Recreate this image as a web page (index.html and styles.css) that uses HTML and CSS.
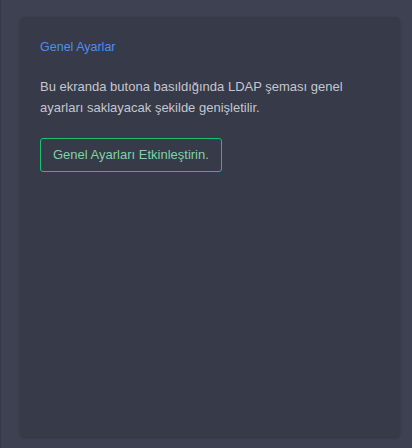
FILE: index.html
```html
<!DOCTYPE html>
<html lang="tr">
<head>
  <meta charset="UTF-8">
  <title>Genel Ayarlar</title>
  <link rel="stylesheet" href="styles.css">
</head>
<body>
  <div id="page">
    <!-- Settings card -->
    <div class="card">
      <h2 class="card-title">Genel Ayarlar</h2>
      <p class="card-text">
        Bu ekranda butona basıldığında LDAP şeması genel
        ayarları saklayacak şekilde genişletilir.
      </p>
      <button class="outline-button">Genel Ayarları Etkinleştirin.</button>
    </div>
  </div>
</body>
</html>
```

FILE: styles.css
```css
:root {
  --page-bg: #3e4152;
  --card-bg: #363a49;
  --title-color: #4d8ff0;
  --text-color: #c5c7cf;
  --success-color: #1fbf72;
  --success-text: #7fd3a6;
}

html, body {
  margin: 0;
  padding: 0;
  height: 100%;
}

body {
  background: var(--page-bg);
  font-family: "Liberation Sans", Arial, sans-serif;
  border-left: 1px solid #363948;
  box-sizing: border-box;
}

#page {
  padding: 17px 12px 11px 19px;
  box-sizing: border-box;
  height: 100%;
}

.card {
  background: var(--card-bg);
  border-radius: 5px;
  box-shadow: 0 1px 3px rgba(0,0,0,0.2);
  height: 100%;
  box-sizing: border-box;
  padding: 21px 20px 20px;
}

.card-title {
  margin: 0 0 20px;
  font-size: 12.5px;
  line-height: 18px;
  font-weight: normal;
  color: var(--title-color);
}

.card-text {
  margin: 0 0 20px;
  font-size: 13px;
  line-height: 21px;
  color: var(--text-color);
}

.outline-button {
  background: none;
  border: 1px solid var(--success-color);
  border-radius: 3px;
  color: var(--success-text);
  font-family: inherit;
  font-size: 13px;
  line-height: 18px;
  padding: 7px 12px;
  cursor: pointer;
}
```
